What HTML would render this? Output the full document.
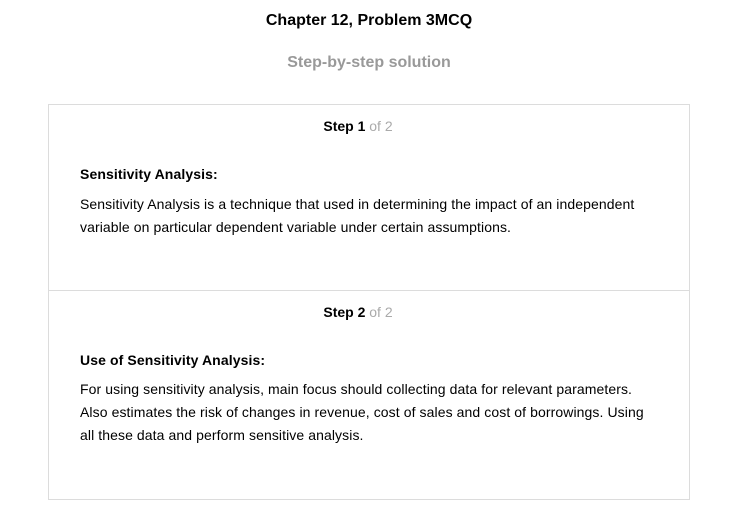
<!DOCTYPE html>
<html><head><meta charset="utf-8"><style>
body{margin:0;width:738px;height:526px;background:#fff;font-family:"Liberation Sans",Arial,sans-serif;color:#000;position:relative;overflow:hidden}
.a{position:absolute;white-space:nowrap}
.t{left:0;width:738px;text-align:center;font-weight:bold;font-size:16px}
.box{position:absolute;left:48px;top:104px;width:640px;height:394px;border:1px solid #dcdcdc}
.div{position:absolute;left:48px;top:290px;width:642px;height:1px;background:#dcdcdc}
.st{left:0;width:716px;text-align:center;font-size:14px}
.st b{font-weight:bold}.st span{color:#aaa}
.h{left:80px;font-weight:bold;font-size:14px;letter-spacing:0.1px}
.p{left:80px;font-size:14px;line-height:23px;letter-spacing:0.09px}
</style></head><body>
<div class="a t" style="top:12px">Chapter 12, Problem 3MCQ</div>
<div class="a t" style="top:54px;color:#999">Step-by-step solution</div>
<div class="box"></div>
<div class="div"></div>
<div class="a st" style="top:118px"><b>Step 1</b> <span>of 2</span></div>
<div class="a h" style="top:166px">Sensitivity Analysis:</div>
<div class="a p" style="top:193px">Sensitivity Analysis is a technique that used in determining the impact of an independent<br>variable on particular dependent variable under certain assumptions.</div>
<div class="a st" style="top:304px"><b>Step 2</b> <span>of 2</span></div>
<div class="a h" style="top:352px">Use of Sensitivity Analysis:</div>
<div class="a p" style="top:378px">For using sensitivity analysis, main focus should collecting data for relevant parameters.<br>Also estimates the risk of changes in revenue, cost of sales and cost of borrowings. Using<br>all these data and perform sensitive analysis.</div>
</body></html>
